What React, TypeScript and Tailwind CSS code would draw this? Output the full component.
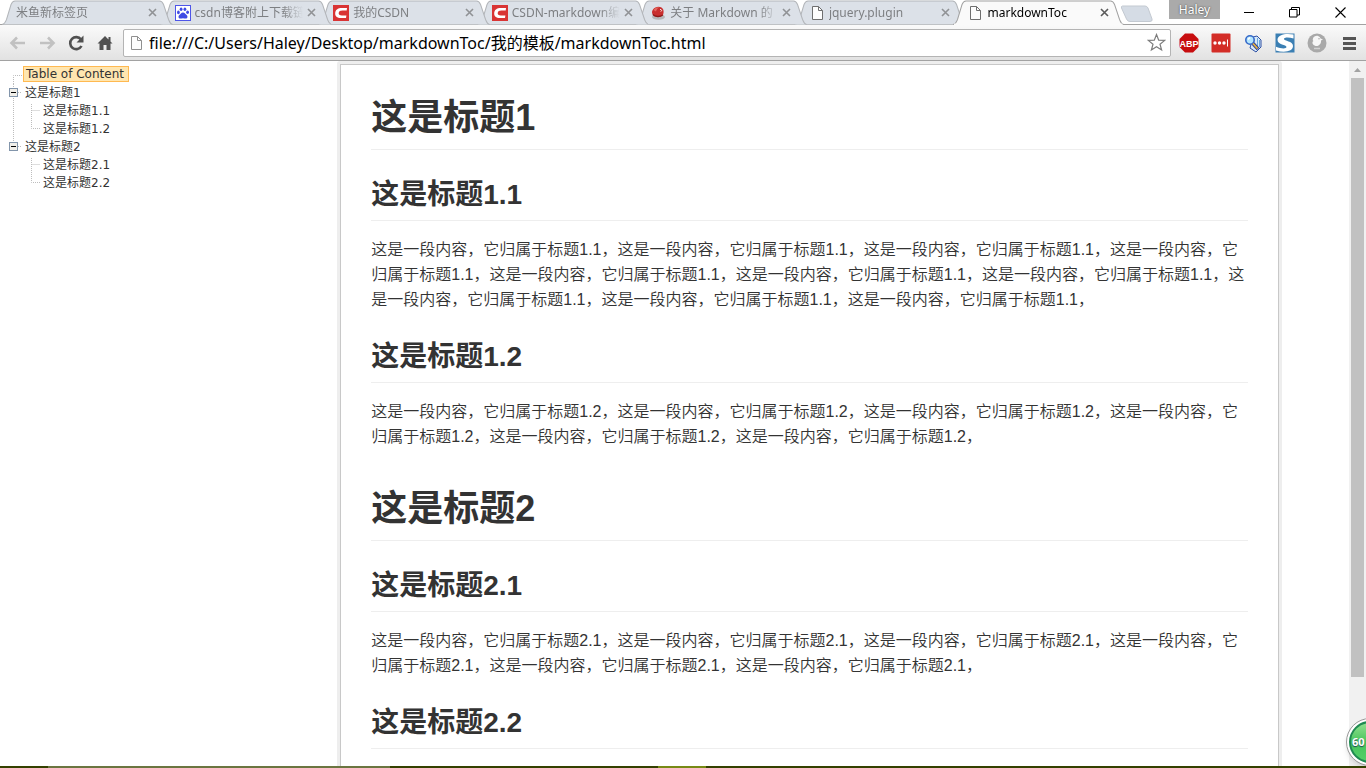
import { useState } from 'react';
import type { ReactNode } from 'react';

interface Tab {
  title: string;
  icon: ReactNode;
  active?: boolean;
}

interface Section {
  level: 1 | 2;
  title: string;
  repeat: number;
}

const FileIcon = ({ color = '#6f6f6f' }: { color?: string }) => (
  <svg width="16" height="16" viewBox="0 0 16 16" className="shrink-0">
    <path d="M3.5 1.5h6l4 4v9h-10z" fill="#fdfdfd" stroke={color} />
    <path d="M9.5 1.5v4h4" fill="none" stroke={color} />
  </svg>
);

const BaiduIcon = () => (
  <svg width="16" height="16" viewBox="0 0 16 16" className="shrink-0">
    <rect x="0.5" y="0.5" width="15" height="15" fill="#fff" stroke="#4e55e8" />
    <g fill="#3f4be4">
      <ellipse cx="3.4" cy="7.4" rx="1.4" ry="1.8" />
      <ellipse cx="6.1" cy="4.2" rx="1.4" ry="1.8" />
      <ellipse cx="9.9" cy="4.2" rx="1.4" ry="1.8" />
      <ellipse cx="12.6" cy="7.2" rx="1.4" ry="1.8" />
      <path d="M8 7.4c1.800 0 2.400 1.600 3.600 2.600 1.400 1.200 1.200 3.600-1 3.600-1 0-1.600-.3-2.600-.3s-1.600.3-2.600.3c-2.200 0-2.400-2.400-1-3.600C5.600 9 6.200 7.400 8 7.400z" />
    </g>
  </svg>
);

const CsdnIcon = () => (
  <svg width="16" height="16" viewBox="0 0 16 16" className="shrink-0">
    <rect width="16" height="16" fill="#d93434" />
    <path d="M14 3H9C4.500 3 2.500 5 2.200 8 2 11.300 4 13 8 13h5l.4-2.500H9c-2.500 0-3.500-.7-3.300-2.400C5.900 6.300 7 5.500 9.500 5.500h4.200z" fill="#fff" />
  </svg>
);

const RubyIcon = () => (
  <svg width="16" height="16" viewBox="0 0 16 16" className="shrink-0">
    <ellipse cx="8.500" cy="12" rx="6.500" ry="2.800" fill="#b4b6b8" />
    <path d="M3 4.500C5 1.500 9 1 11.500 2.500c2.500 1.500 2.500 5 1.500 7.500-2 2.500-8 2.500-10 0-1.500-2-1.200-4 0-5.500z" fill="#c92f2f" />
    <path d="M3.500 5C5 2.500 7.500 2 9.500 2.200 7.500 3 6.500 4.500 6 6.500z" fill="#e2655e" />
    <path d="M10 4.200l1.800 1.200-1 1.200" fill="none" stroke="#fbe3e1" />
    <path d="M2.800 9.500c2.500 2.500 7 2.700 10 .5" fill="none" stroke="#8e1a1a" strokeWidth="1.300" />
  </svg>
);

const tabs: Tab[] = [
  { title: '米鱼新标签页', icon: null },
  { title: 'csdn博客附上下载链', icon: <BaiduIcon /> },
  { title: '我的CSDN', icon: <CsdnIcon /> },
  { title: 'CSDN-markdown编', icon: <CsdnIcon /> },
  { title: '关于 Markdown 的', icon: <RubyIcon /> },
  { title: 'jquery.plugin', icon: <FileIcon /> },
  { title: 'markdownToc', icon: <FileIcon />, active: true },
];

const stacking = ['z-[6]', 'z-[5]', 'z-[4]', 'z-[3]', 'z-[2]', 'z-[1]', 'z-10'];

const sections: Section[] = [
  { level: 1, title: '这是标题1', repeat: 0 },
  { level: 2, title: '这是标题1.1', repeat: 10 },
  { level: 2, title: '这是标题1.2', repeat: 6 },
  { level: 1, title: '这是标题2', repeat: 0 },
  { level: 2, title: '这是标题2.1', repeat: 6 },
  { level: 2, title: '这是标题2.2', repeat: 0 },
];

function TabItem({ tab, order }: { tab: Tab; order: string }) {
  return (
    <div className={`relative flex h-full min-w-0 flex-1 items-center pl-[14px] ${order}`}>
      <svg
        className="absolute top-0 left-0 h-full w-[calc(100%+12px)]"
        viewBox="0 0 170 25"
        preserveAspectRatio="none"
      >
        <path
          d="M0 24.500C3 24 3.500 22 4.500 19.500L9 4.500C10 2 11 1 13 1H157C159 1 160 2 161 4.500L166 19.500C167 22 167.500 24 170 24.500"
          fill={tab.active ? '#fafafa' : '#dce1e8'}
          stroke={tab.active ? '#a2a2a2' : '#b2b5b9'}
        />
        {tab.active && <path d="M1 24.500H169" stroke="#fafafa" strokeWidth="2" />}
      </svg>
      <div className="relative flex min-w-0 flex-1 items-center">
        {tab.icon && <span className="mr-1 shrink-0">{tab.icon}</span>}
        <a
          href="#tab"
          className={`min-w-0 flex-1 overflow-hidden text-xs leading-4 whitespace-nowrap [mask-image:linear-gradient(to_right,black_calc(100%-20px),transparent)] ${
            tab.active ? 'text-black' : 'text-[#7d7f82]'
          }`}
        >
          {tab.title}
        </a>
        <button aria-label="Close tab" className="flex w-4 shrink-0 justify-center">
          <svg width="9" height="9" viewBox="0 0 9 9">
            <path d="M1 1l7 7M8 1l-7 7" stroke={tab.active ? '#5a5a5a' : '#909295'} strokeWidth="1.600" />
          </svg>
        </button>
      </div>
    </div>
  );
}

function TabStrip() {
  return (
    <header className="flex h-[25px] shrink-0 border-b border-[#a2a2a2] bg-white pl-[2px]">
      <nav className="-mb-px flex max-w-[1110px] flex-1">
        {tabs.map((tab, i) => (
          <TabItem key={tab.title} tab={tab} order={stacking[i]} />
        ))}
      </nav>
      <button aria-label="New tab" className="ml-2 pt-1">
        <svg width="34" height="18" viewBox="0 0 34 18">
          <path d="M2.500 1H25q2 0 3 2l4 11q1 2-2 2.500H10q-2.500 0-3.500-2.500L1.500 3Q1 1 2.500 1z" fill="#d5dce5" stroke="#c3c9d1" />
        </svg>
      </button>
      <div className="ml-auto flex items-start">
        <button className="h-[19px] w-[51px] bg-[#aaaaaa] text-xs leading-[19px] text-white [text-shadow:0_0_2px_#333]">
          Haley
        </button>
        <button aria-label="Minimize" className="flex h-6 w-[58px] items-center justify-center">
          <svg width="11" height="11" viewBox="0 0 11 11">
            <path d="M0 5.500h10" stroke="#000" />
          </svg>
        </button>
        <button aria-label="Restore" className="flex h-6 w-8 items-center justify-center">
          <svg width="11" height="11" viewBox="0 0 11 11" fill="none" stroke="#000">
            <path d="M.5 2.500h7.500v7.500H.5zM2.500 2.500v-2h8v7.500h-2.500" />
          </svg>
        </button>
        <button aria-label="Close" className="flex h-6 w-14 items-center justify-center pl-1">
          <svg width="11" height="11" viewBox="0 0 11 11">
            <path d="M.5.500l10 10M10.500.500l-10 10" stroke="#000" strokeWidth="1.100" />
          </svg>
        </button>
      </div>
    </header>
  );
}

function Toolbar() {
  const [url, setUrl] = useState('file:///C:/Users/Haley/Desktop/markdownToc/我的模板/markdownToc.html');

  return (
    <div className="flex h-9 shrink-0 items-center border-b border-[#a2a2a2] bg-gradient-to-b from-[#fafafa] to-[#e2e2e2] pr-[7px] pl-2">
      <div className="flex shrink-0 gap-[9px]">
        <button aria-label="Back" className="flex w-5 justify-center">
          <svg width="18" height="16" viewBox="0 0 18 16" fill="none" stroke="#c1c1c1" strokeWidth="2.600">
            <path d="M16 8H3M8 2.500L2.500 8l5.500 5.500" />
          </svg>
        </button>
        <button aria-label="Forward" className="flex w-5 justify-center">
          <svg width="18" height="16" viewBox="0 0 18 16" fill="none" stroke="#c1c1c1" strokeWidth="2.600">
            <path d="M2 8h13M10 2.500l5.500 5.500-5.500 5.500" />
          </svg>
        </button>
        <button aria-label="Reload" className="flex w-5 justify-center">
          <svg width="16" height="16" viewBox="0 0 16 16">
            <path d="M13 4.500A6 6 0 1 0 13.500 11" fill="none" stroke="#505050" strokeWidth="2.600" />
            <path d="M15.500 0.500V7.500H8.500z" fill="#505050" />
          </svg>
        </button>
        <button aria-label="Home" className="flex w-5 justify-center">
          <svg width="16" height="16" viewBox="0 0 16 16" fill="#505050">
            <path d="M8 1L.5 8.500h2V15h4v-5h3v5h4V8.500h2L13.500 6.500V2h-2v2.500z" />
          </svg>
        </button>
      </div>
      <label className="ml-2 flex h-7 min-w-0 flex-1 items-center rounded-[2px] border border-[#b4b4b4] bg-white pr-1 pl-1">
        <FileIcon color="#909090" />
        <input
          aria-label="Address"
          value={url}
          onChange={(e) => setUrl(e.target.value)}
          className="ml-[5px] min-w-0 flex-1 bg-transparent text-base leading-5 text-black outline-none"
        />
        <svg width="19" height="19" viewBox="0 0 19 19" className="shrink-0">
          <path d="M9.500 1.500l2.200 5.600 6 .3-4.700 3.800 1.600 5.800-5.100-3.300L4.400 17 6 11.200 1.300 7.400l6-.3z" fill="#fff" stroke="#7d7d7d" strokeWidth="1.200" />
        </svg>
      </label>
      <div className="ml-2 flex shrink-0 items-center gap-3">
        <button aria-label="ABP">
          <svg width="20" height="20" viewBox="0 0 20 20">
            <path d="M6 .5h8L19.500 6v8L14 19.500H6L.5 14V6z" fill="#c70d0f" />
            <text x="10" y="13.500" textAnchor="middle" fill="#fff" fontSize="9" fontWeight="700" fontFamily="Liberation Sans">ABP</text>
          </svg>
        </button>
        <button aria-label="Passwords">
          <svg width="20" height="20" viewBox="0 0 20 20">
            <rect x="0.500" y="0.500" width="19" height="19" rx="1" fill="#d32d27" />
            <g fill="#fff">
              <circle cx="4" cy="10" r="1.700" />
              <circle cx="8.500" cy="10" r="1.700" />
              <circle cx="13" cy="10" r="1.700" />
              <rect x="16" y="6.500" width="1" height="7" />
            </g>
          </svg>
        </button>
        <button aria-label="Search page">
          <svg width="20" height="20" viewBox="0 0 20 20">
            <path d="M10 4l4-1 4 4v7l-5 5-6-4z" fill="#d7e9f8" stroke="#2c4fa4" />
            <path d="M14.500 5v9M16.500 7v7" stroke="#69a5de" />
            <circle cx="7" cy="7" r="4.200" fill="#b5e6fd" stroke="#3569c9" strokeWidth="1.600" />
            <path d="M5 6.500l2-2" stroke="#fff" strokeWidth="1.500" />
            <path d="M10 10.500l5 5.500" stroke="#2d3f96" strokeWidth="3.600" />
            <path d="M10 10.500l4.500 5" stroke="#e6b43c" strokeWidth="1.800" />
          </svg>
        </button>
        <button aria-label="Stylish">
          <svg width="20" height="20" viewBox="0 0 20 20">
            <rect x="0.500" y="0.500" width="19" height="19" fill="#3b7fb3" />
            <path d="M18.500 1.500v4C14 4 9 4 9 6c0 2.200 9 1.900 9 7 0 5.500-8.500 7-17 4.500v-3.700c5 2 10.500 2.200 10.500.2C11.500 11.700 2.500 12 2.500 6.800c0-5.500 9-6.800 16-5.300z" fill="#fff" />
          </svg>
        </button>
        <button aria-label="Extension">
          <svg width="20" height="20" viewBox="0 0 20 20">
            <circle cx="10" cy="10" r="9.500" fill="#a9a9a9" />
            <path d="M6 5.500C6.500 3.500 9 2.500 11 3c1.500.4 2.200 1.300 2.500 2.500l2.500 1-2 1c.3 2-.7 4-2.500 5-1.800 1-4 .5-5.300-1C5 10 5.300 8.500 6.500 8 5.500 7.300 5.700 6.300 6 5.500z" fill="#f7f7f7" />
            <circle cx="12" cy="5.800" r="0.700" fill="#a0a0a0" />
            <path d="M7 15.500h6" stroke="#d2d2d2" strokeWidth="1.500" />
          </svg>
        </button>
        <button aria-label="Menu" className="flex w-5 justify-center">
          <svg width="13" height="14" viewBox="0 0 13 14" fill="#555">
            <path d="M0 1h13v3H0zM0 6h13v3H0zM0 11h13v3H0z" />
          </svg>
        </button>
      </div>
    </div>
  );
}

// One 18px cell of the tree gutter
function Line({ d }: { d: string }) {
  return (
    <svg width="18" height="18" viewBox="0 0 18 18" className="shrink-0">
      <path d={d} fill="none" stroke="#bdbdbd" strokeDasharray="1 1" />
    </svg>
  );
}

function Switch({ d }: { d: string }) {
  return (
    <button aria-label="Collapse" className="shrink-0">
      <svg width="18" height="18" viewBox="0 0 18 18">
        <path d={d} fill="none" stroke="#bdbdbd" strokeDasharray="1 1" />
        <rect x="4.500" y="4.500" width="8" height="8" fill="#f1efe9" stroke="#8295ab" />
        <path d="M6 8.500h5" stroke="#000" />
      </svg>
    </button>
  );
}

function TreeRow({ title, children }: { title: string; children: ReactNode }) {
  return (
    <li className="flex h-[18px] items-center">
      {children}
      <a href="#toc" className="px-[2px]">{title}</a>
    </li>
  );
}

function Toc() {
  return (
    <aside className="w-1/4 shrink-0 pt-[5px] pl-[5px] font-['DejaVu_Sans','Noto_Sans_CJK_SC',sans-serif] text-xs leading-4 text-[#333]">
      <ul>
        <li className="flex h-[18px] items-start">
          <Line d="M17 9.500H8.500V18" />
          <a href="#toc" className="border border-[#ffb951] bg-[#ffe6b0] pr-1 pl-[2px] leading-[14px]">
            Table of Content
          </a>
        </li>
        <TreeRow title="这是标题1"><Switch d="M8.500 0V18M13 8.500h4" /></TreeRow>
        <TreeRow title="这是标题1.1">
          <Line d="M8.500 0V18" />
          <Line d="M8.500 2V18M8.500 8.500H17" />
        </TreeRow>
        <TreeRow title="这是标题1.2">
          <Line d="M8.500 0V18" />
          <Line d="M8.500 0V8.500H17" />
        </TreeRow>
        <TreeRow title="这是标题2"><Switch d="M8.500 0V8M13 8.500h4" /></TreeRow>
        <TreeRow title="这是标题2.1">
          <Line d="" />
          <Line d="M8.500 2V18M8.500 8.500H17" />
        </TreeRow>
        <TreeRow title="这是标题2.2">
          <Line d="" />
          <Line d="M8.500 0V8.500H17" />
        </TreeRow>
      </ul>
    </aside>
  );
}

function Article() {
  return (
    <main className="w-[70%] rounded-t-[3px] bg-[#eeeeee] p-[3px]">
      <article className="min-h-full border border-[#c8c8c8] bg-white p-[30px] font-['Liberation_Sans','Noto_Sans_CJK_SC',sans-serif] text-[#333]">
        {sections.map((s) => (
          <section key={s.title}>
            {s.level === 1 ? (
              <h1 className="mt-[37px] border-b border-[#eee] pb-2 text-4xl leading-[46px] font-bold in-[section:first-child]:mt-0">
                {s.title}
              </h1>
            ) : (
              <h2 className="mt-[27px] border-b border-[#eee] pb-[7px] text-[28px] leading-9 font-bold">{s.title}</h2>
            )}
            {s.repeat > 0 && (
              <p className="mt-4 text-base leading-[25px] font-[350]">
                {`这是一段内容，它归属于${s.title.replace('这是', '')}，`.repeat(s.repeat)}
              </p>
            )}
          </section>
        ))}
      </article>
    </main>
  );
}

export default function App() {
  return (
    <div className="flex h-screen flex-col overflow-hidden bg-white font-['Noto_Sans','Noto_Sans_CJK_SC',sans-serif]">
      <TabStrip />
      <Toolbar />
      <div className="relative flex min-h-0 flex-1 overflow-hidden">
        <div className="flex min-w-0 flex-1">
          <Toc />
          <Article />
        </div>
        <div className="flex w-[17px] shrink-0 flex-col items-center bg-[#f1f1f1]">
          <svg width="17" height="17" viewBox="0 0 17 17" className="shrink-0">
            <path d="M5 11L8.500 7l3.500 4z" fill="#a3a3a3" />
          </svg>
          <div className="h-[85%] w-[13px] bg-[#c1c1c1]" />
        </div>
        <div className="absolute -right-7 bottom-0 flex size-12 items-center rounded-full border border-[#999] bg-white p-[2px] shadow-md">
          <div className="flex size-full items-center rounded-full border-2 border-[#208a52] bg-gradient-to-b from-[#8fe08f] via-[#45c45c] to-[#54cf69] pl-[1px] text-[11px] font-bold text-white [text-shadow:0_1px_1px_#245]">
            60
          </div>
        </div>
      </div>
      <footer className="flex h-[2px] shrink-0 bg-[#344000]">
        <div className="ml-12 w-1/4 bg-[#6b7540]" />
        <div className="ml-auto w-12 bg-[#778a15]" />
        <div className="w-[660px] shrink-0" />
      </footer>
    </div>
  );
}
